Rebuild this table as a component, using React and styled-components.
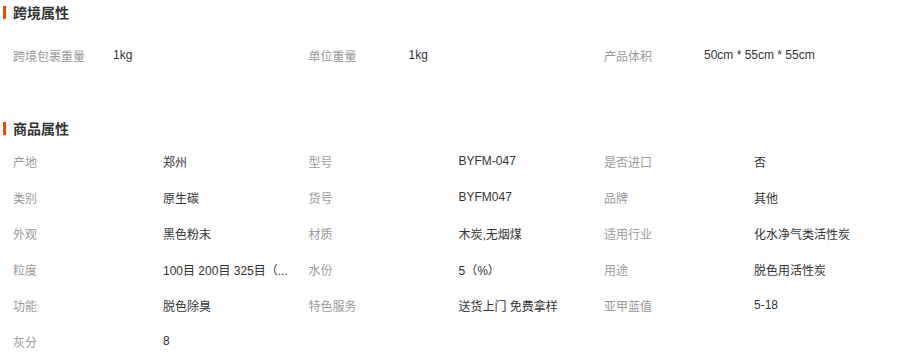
import React from "react";
import styled, { createGlobalStyle } from "styled-components";

const GlobalStyle = createGlobalStyle`
  body {
    margin: 0;
    background: #fff;
    font-family: "Liberation Sans", "Noto Sans CJK SC", sans-serif;
    font-size: 12px;
    color: #333;
  }
`;

const Page = styled.div`
  width: 914px;
`;

const Section = styled.section`
  margin-top: ${(p) => p.$top}px;
`;

const SectionTitle = styled.h3`
  display: flex;
  align-items: center;
  gap: 7px;
  height: 24px;
  margin: 0;
  padding-left: 3px;
  font-size: 14px;
  font-weight: bold;
  color: #333;
  &::before {
    content: "";
    width: 3px;
    height: 13px;
    background: #ff4400;
  }
`;

const Grid = styled.div`
  display: grid;
  grid-template-columns: repeat(3, 295.5px);
  padding-left: 13px;
  margin-top: ${(p) => p.$gap}px;
`;

const Cell = styled.div`
  display: flex;
  align-items: center;
  height: 36px;
`;

const Label = styled.span`
  flex: 0 0 ${(p) => p.$w}px;
  color: #999;
`;

const Value = styled.span`
  color: #333;
  white-space: nowrap;
`;

const crossBorder = [
  ["跨境包裹重量", "1kg"],
  ["单位重量", "1kg"],
  ["产品体积", "50cm * 55cm * 55cm"],
];

const attrs = [
  ["产地", "郑州"],
  ["型号", "BYFM-047"],
  ["是否进口", "否"],
  ["类别", "原生碳"],
  ["货号", "BYFM047"],
  ["品牌", "其他"],
  ["外观", "黑色粉末"],
  ["材质", "木炭,无烟煤"],
  ["适用行业", "化水净气类活性炭"],
  ["粒度", "100目 200目 325目（..."],
  ["水份", "5（%）"],
  ["用途", "脱色用活性炭"],
  ["功能", "脱色除臭"],
  ["特色服务", "送货上门 免费拿样"],
  ["亚甲蓝值", "5-18"],
  ["灰分", "8"],
];

const AttrGrid = ({ items, labelWidth, gap }) => (
  <Grid $gap={gap}>
    {items.map(([k, v]) => (
      <Cell key={k}>
        <Label $w={labelWidth}>{k}</Label>
        <Value>{v}</Value>
      </Cell>
    ))}
  </Grid>
);

export default function App() {
  return (
    <Page>
      <GlobalStyle />
      <Section $top={0}>
        <SectionTitle>跨境属性</SectionTitle>
        <AttrGrid items={crossBorder} labelWidth={100} gap={13} />
      </Section>
      <Section $top={43}>
        <SectionTitle>商品属性</SectionTitle>
        <AttrGrid items={attrs} labelWidth={150} gap={3} />
      </Section>
    </Page>
  );
}
